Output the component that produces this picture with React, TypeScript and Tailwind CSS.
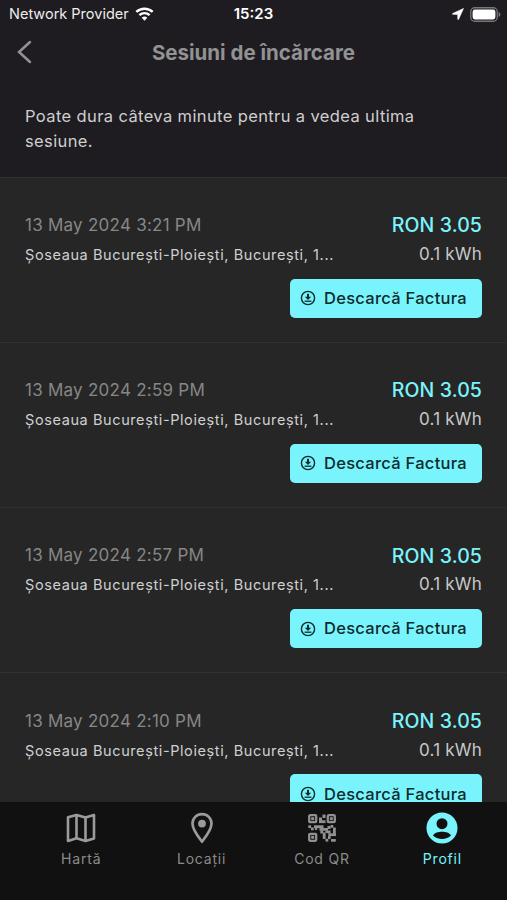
interface Session {
  date: string;
  address: string;
  price: string;
  energy: string;
}

const ADDRESS = "Șoseaua București-Ploiești, București, 1...";

const sessions: Session[] = [
  { date: "13 May 2024 3:21 PM", address: ADDRESS, price: "RON 3.05", energy: "0.1 kWh" },
  { date: "13 May 2024 2:59 PM", address: ADDRESS, price: "RON 3.05", energy: "0.1 kWh" },
  { date: "13 May 2024 2:57 PM", address: ADDRESS, price: "RON 3.05", energy: "0.1 kWh" },
  { date: "13 May 2024 2:10 PM", address: ADDRESS, price: "RON 3.05", energy: "0.1 kWh" },
];

// Data modules of the QR icon: x, y, width, height
const QR_BLOCKS = [
  [14.5, 0.5, 3, 3.5],
  [11, 3.5, 3, 5.5],
  [11, 6.3, 6.5, 2.8],
  [0.3, 11.3, 2.8, 2.8],
  [3, 13.5, 2.8, 2.8],
  [6, 11.3, 9.5, 2.8],
  [11.5, 14, 8.5, 2.8],
  [19.5, 12, 3, 3],
  [22.5, 11, 2.8, 2.8],
  [25, 13.5, 2.8, 8.5],
  [7, 14, 2.2, 2],
  [12.3, 16.5, 2.8, 3],
  [14.8, 18.5, 2.8, 6.5],
  [17.5, 16.5, 2.5, 2.6],
  [20.3, 19.3, 7.5, 2.8],
  [20, 16.5, 2.6, 3],
  [17.5, 24.8, 2.8, 2.8],
  [20, 22, 2.6, 3],
  [23, 25, 4.8, 2.7],
];

function WifiIcon() {
  return (
    <svg width="19" height="14" viewBox="0 0 19 14" fill="none" stroke="#fff">
      <path d="M1.3 4.9a12 12 0 0 1 16.400 0" strokeWidth="2.5" />
      <path d="M4.4 8.2a7.3 7.3 0 0 1 10.200 0" strokeWidth="2.4" />
      <path d="M9.5 13.7 6.7 10.800a4.1 4.1 0 0 1 5.600 0z" fill="#fff" stroke="none" />
    </svg>
  );
}

function LocationIcon() {
  return (
    <svg width="12" height="12" viewBox="0 0 12 12" fill="#fff" stroke="#fff" strokeWidth="0.6" strokeLinejoin="round">
      <path d="M11.500.5 6.600 11.300c-.2.500-.8.400-.8-.1L5.700 6.400.900 6.300C.3 6.300.2 5.700.7 5.500z" />
    </svg>
  );
}

function BatteryIcon() {
  return (
    <svg width="31" height="15" viewBox="0 0 31 15" fill="none">
      <rect x="0.75" y="0.75" width="26.5" height="13.5" rx="4" stroke="#77767a" strokeWidth="1.3" />
      <rect x="2.6" y="2.6" width="22.8" height="9.8" rx="2.3" fill="#fff" />
      <path d="M28.600 5v5c1.100-.4 1.800-1.300 1.800-2.500S29.700 5.400 28.600 5z" fill="#77767a" />
    </svg>
  );
}

function DownloadIcon() {
  return (
    <svg width="16" height="16" viewBox="0 0 16 16" fill="none" stroke="#0c2b2e">
      <circle cx="8" cy="8" r="6.6" strokeWidth="1.4" />
      <path d="M7 3.700h2v3h2.200L8 9.900 4.800 6.700H7z" fill="#0c2b2e" stroke="none" />
      <path d="M4.600 11.200h6.800" strokeWidth="1.3" />
    </svg>
  );
}

function MapIcon() {
  return (
    <svg width="30" height="30" viewBox="0 0 30 30" fill="none" stroke="#9b9b9b" strokeWidth="2.6" strokeLinejoin="round">
      <path d="M2 4.200 10.500 2l9 2.600L28 2v23.500l-8.500 2.400-9-2.600L2 27.900z" />
      <path d="M10.500 2v23.500M19.500 4.600v23.200" />
    </svg>
  );
}

function PinIcon() {
  return (
    <svg width="24" height="32" viewBox="0 0 24 32" fill="none">
      <path
        d="M12 2.200c5.400 0 9.500 4.100 9.500 9.300 0 6.600-6.900 14.700-9.500 18.200-2.600-3.500-9.500-11.600-9.500-18.200 0-5.200 4.100-9.300 9.500-9.300z"
        stroke="#9b9b9b"
        strokeWidth="2.7"
        strokeLinejoin="round"
      />
      <circle cx="12" cy="11.6" r="3.9" fill="#9b9b9b" />
    </svg>
  );
}

function QrIcon() {
  return (
    <svg width="28" height="28" viewBox="0 0 28 28" fill="#919191">
      {[[0, 0], [18.6, 0], [0, 18.6]].map(([x, y]) => (
        <g key={`${x}-${y}`}>
          <rect x={x + 1.2} y={y + 1.2} width="7" height="7" rx="1" fill="none" stroke="#919191" strokeWidth="2.3" />
          <rect x={x + 3.2} y={y + 3.2} width="3" height="3" />
        </g>
      ))}
      {QR_BLOCKS.map(([x, y, w, h]) => (
        <rect key={`${x}-${y}`} x={x} y={y} width={w} height={h} />
      ))}
    </svg>
  );
}

function ProfileIcon() {
  return (
    <svg width="32" height="32" viewBox="0 0 32 32">
      <circle cx="16" cy="16" r="15.5" fill="#7af4fc" />
      <circle cx="16" cy="11.7" r="5.5" fill="#111" />
      <path d="M7 23.500c1.500-2.800 5.300-3.800 9-3.800s7.500 1 9 3.800c-2.200 2.300-5.400 3.500-9 3.500s-6.800-1.200-9-3.500z" fill="#111" />
    </svg>
  );
}

function SessionRow({ session }: { session: Session }) {
  return (
    <li className="h-[165.3px] shrink-0 border-t border-[#303131] px-[25px] pt-9">
      <div className="flex h-6 items-center justify-between">
        <span className="text-[17px] tracking-[0.25px] text-[#868686]">{session.date}</span>
        <span className="text-[19.5px] font-medium tracking-[0.1px] text-[#7af4fc]">{session.price}</span>
      </div>
      <div className="mt-[5px] flex h-6 items-center justify-between">
        <span className="text-[14.5px] tracking-[0.6px] text-[#d0d0d0]">{session.address}</span>
        <span className="text-[17px] tracking-[0.2px] text-[#c8c8c8]">{session.energy}</span>
      </div>
      <button className="ml-auto mt-[12px] flex h-[39px] w-[192px] items-center rounded-[5px] bg-[#7af4fc] pl-[10px]">
        <DownloadIcon />
        <span className="ml-[8px] whitespace-nowrap text-[16.5px] font-medium tracking-[0.28px] text-[#0c2b2e]">
          Descarcă Factura
        </span>
      </button>
    </li>
  );
}

function Tab({ icon, label, active }: { icon: React.ReactNode; label: string; active?: boolean }) {
  return (
    <a className={`flex w-[120.4px] flex-col items-center ${active ? "text-[#7af4fc]" : "text-[#8b8b8b]"}`}>
      <span className="flex h-[34px] items-center">{icon}</span>
      <span className="mt-1 text-[14px] leading-5 tracking-[0.8px]">{label}</span>
    </a>
  );
}

export default function App() {
  return (
    <div className="flex h-[900px] w-[507px] flex-col overflow-hidden bg-[#262626] font-['Inter',sans-serif]">
      <header className="h-[176.6px] shrink-0 bg-[#1e1c20]">
        {/* Status bar */}
        <div className="grid h-7 grid-cols-3 items-center pl-[9px] pr-[6px] text-white">
          <div className="flex items-center gap-1.5 whitespace-nowrap text-[14.5px] text-[#ececec]">
            <span>Network Provider</span>
            <WifiIcon />
          </div>
          <span className="pr-[3px] text-center text-[15px] font-semibold">15:23</span>
          <div className="flex items-center justify-end gap-[6px]">
            <LocationIcon />
            <BatteryIcon />
          </div>
        </div>

        <div className="grid h-12 grid-cols-[48px_1fr_48px] items-center">
          <svg className="ml-4" width="17" height="26" viewBox="0 0 17 26" fill="none" stroke="#929194" strokeWidth="2.5">
            <path d="M14 3 3 13l11 10" strokeLinecap="round" />
          </svg>
          <h1 className="pt-0.5 text-center text-[20.5px] font-bold text-[#929194]">Sesiuni de încărcare</h1>
        </div>

        <p className="mt-7 px-[25px] text-[16.5px] leading-[24.5px] tracking-[0.38px] text-[#cfcfd0]">
          Poate dura câteva minute pentru a vedea ultima
          <br />
          sesiune.
        </p>
      </header>

      <ul className="flex min-h-0 flex-1 flex-col overflow-hidden">
        {sessions.map((session) => (
          <SessionRow key={session.date} session={session} />
        ))}
      </ul>

      <nav className="flex h-[98px] shrink-0 bg-[#111] pl-[21px] pt-[9px]">
        <Tab icon={<MapIcon />} label="Hartă" />
        <Tab icon={<PinIcon />} label="Locații" />
        <Tab icon={<QrIcon />} label="Cod QR" />
        <Tab icon={<ProfileIcon />} label="Profil" active />
      </nav>
    </div>
  );
}
